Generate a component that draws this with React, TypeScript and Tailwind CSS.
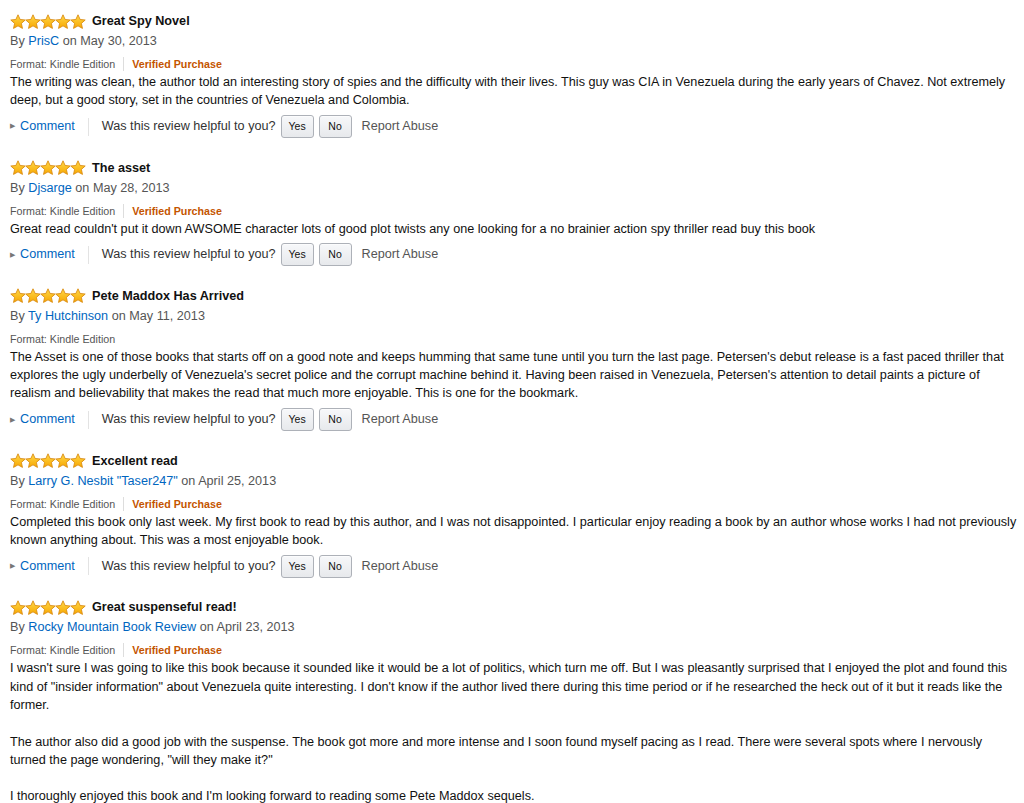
import React from "react";

type Review = {
  title: string;
  author: string;
  date: string;
  verified: boolean;
  body: string[];
  actions: boolean;
};

const reviews: Review[] = [
  {
    title: "Great Spy Novel",
    author: "PrisC",
    date: "May 30, 2013",
    verified: true,
    body: [
      "The writing was clean, the author told an interesting story of spies and the difficulty with their lives. This guy was CIA in Venezuela during the early years of Chavez. Not extremely deep, but a good story, set in the countries of Venezuela and Colombia.",
    ],
    actions: true,
  },
  {
    title: "The asset",
    author: "Djsarge",
    date: "May 28, 2013",
    verified: true,
    body: [
      "Great read couldn't put it down AWSOME character lots of good plot twists any one looking for a no brainier action spy thriller read buy this book",
    ],
    actions: true,
  },
  {
    title: "Pete Maddox Has Arrived",
    author: "Ty Hutchinson",
    date: "May 11, 2013",
    verified: false,
    body: [
      "The Asset is one of those books that starts off on a good note and keeps humming that same tune until you turn the last page. Petersen's debut release is a fast paced thriller that explores the ugly underbelly of Venezuela's secret police and the corrupt machine behind it. Having been raised in Venezuela, Petersen's attention to detail paints a picture of realism and believability that makes the read that much more enjoyable. This is one for the bookmark.",
    ],
    actions: true,
  },
  {
    title: "Excellent read",
    author: 'Larry G. Nesbit "Taser247"',
    date: "April 25, 2013",
    verified: true,
    body: [
      "Completed this book only last week. My first book to read by this author, and I was not disappointed. I particular enjoy reading a book by an author whose works I had not previously known anything about. This was a most enjoyable book.",
    ],
    actions: true,
  },
  {
    title: "Great suspenseful read!",
    author: "Rocky Mountain Book Review",
    date: "April 23, 2013",
    verified: true,
    body: [
      'I wasn\'t sure I was going to like this book because it sounded like it would be a lot of politics, which turn me off. But I was pleasantly surprised that I enjoyed the plot and found this kind of "insider information" about Venezuela quite interesting. I don\'t know if the author lived there during this time period or if he researched the heck out of it but it reads like the former.',
      'The author also did a good job with the suspense. The book got more and more intense and I soon found myself pacing as I read. There were several spots where I nervously turned the page wondering, "will they make it?"',
      "I thoroughly enjoyed this book and I'm looking forward to reading some Pete Maddox sequels.",
    ],
    actions: false,
  },
];

function Star({ id }: { id: string }) {
  return (
    <svg width="16" height="16" viewBox="0 0 24 24" className="flex-none -mx-[0.5px]">
      <defs>
        <linearGradient id={id} x1="0" y1="0" x2="0" y2="1">
          <stop offset="0" stopColor="#ffd84a" />
          <stop offset="1" stopColor="#f7a700" />
        </linearGradient>
      </defs>
      <path
        d="M12 1.2l3.2 7 7.6.8-5.7 5.1 1.6 7.5L12 17.8l-6.7 3.8 1.6-7.5L1.2 9l7.6-.8z"
        fill={`url(#${id})`}
        stroke="#d98a10"
        strokeWidth="1.3"
        strokeLinejoin="round"
      />
    </svg>
  );
}

function Stars({ idx }: { idx: number }) {
  return (
    <div className="flex flex-row items-center">
      {[0, 1, 2, 3, 4].map((i) => (
        <Star key={i} id={`st${idx}-${i}`} />
      ))}
    </div>
  );
}

function VoteButton({ label }: { label: string }) {
  return (
    <button className="h-[23px] min-w-[33px] px-[6px] rounded-[3px] border border-[#adb1b8] bg-gradient-to-b from-[#f7f8fa] to-[#e7e9ec] text-[10.5px] text-[#111] shadow-[0_1px_0_rgba(255,255,255,0.6)_inset]">
      {label}
    </button>
  );
}

export default function App() {
  return (
    <div className="bg-white min-h-[803px] pl-[10px] pt-[12px] font-['Liberation_Sans',Arial,sans-serif] text-[12.65px] text-[#111]">
      <div className="w-[1008px] flex flex-col">
        {reviews.map((r, idx) => (
          <div key={idx} className="flex flex-col mb-[19px]">
            {/* title row */}
            <div className="flex flex-row items-center h-[19px]">
              <Stars idx={idx} />
              <span className="font-bold text-[12.65px] ml-[7px] text-[#111]">
                {r.title}
              </span>
            </div>
            {/* author row */}
            <div className="h-[20px] leading-[20px] text-[#555]">
              By <span className="text-[#0066c0]">{r.author}</span> on{" "}
              {r.date}
            </div>
            {/* format row */}
            <div className="flex flex-row items-center h-[23px] pt-[3px] text-[10.7px] text-[#555]">
              <span>Format: Kindle Edition</span>
              {r.verified && (
                <>
                  <span className="h-[14px] w-px bg-[#ddd] mx-[8px]"></span>
                  <span className="font-bold text-[#c45500]">
                    Verified Purchase
                  </span>
                </>
              )}
            </div>
            {/* body */}
            <div className="leading-[18.3px] -mt-[1px]">
              {r.body.map((p, pi) => (
                <p key={pi} className={pi > 0 ? "mt-[18.3px]" : ""}>
                  {p}
                </p>
              ))}
            </div>
            {/* actions */}
            {r.actions && (
              <div className="flex flex-row items-center h-[26px] mt-[4px]">
                <span className="text-[7px] text-[#777] mr-[5px]">▶</span>
                <span className="text-[#0066c0]">Comment</span>
                <span className="h-[18px] w-px bg-[#e3e3e3] mx-[13px]"></span>
                <span className="text-[#333]">Was this review helpful to you?</span>
                <div className="flex flex-row gap-[5px] ml-[5px]">
                  <VoteButton label="Yes" />
                  <VoteButton label="No" />
                </div>
                <span className="ml-[10px] text-[#555]">Report Abuse</span>
              </div>
            )}
          </div>
        ))}
      </div>
    </div>
  );
}
